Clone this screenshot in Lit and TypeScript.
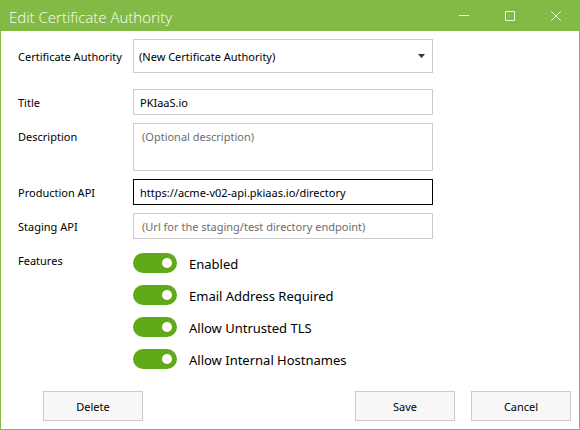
import { LitElement, html, css } from "lit";
import { customElement, property, state } from "lit/decorators.js";

@customElement("toggle-switch")
export class ToggleSwitch extends LitElement {
  @property() label = "";
  @property({ type: Boolean }) checked = false;

  static styles = css`
    :host {
      display: block;
    }
    .row {
      display: flex;
      align-items: center;
      gap: 12px;
      height: 20px;
      font-size: 13px;
      line-height: 20px;
      color: #000;
    }
    .switch {
      appearance: none;
      flex: none;
      display: flex;
      align-items: center;
      box-sizing: border-box;
      width: 44px;
      height: 20px;
      margin: 0;
      padding: 0 5px;
      border-radius: 10px;
      background: #999;
    }
    .switch::before {
      content: "";
      width: 10px;
      height: 10px;
      border-radius: 50%;
      background: #fff;
    }
    .switch:checked {
      justify-content: flex-end;
      background: #60a917;
    }
    .text {
      padding-top: 2px;
    }
  `;

  private onChange(e: Event) {
    this.checked = (e.target as HTMLInputElement).checked;
  }

  render() {
    return html`
      <label class="row">
        <input class="switch" type="checkbox" role="switch" .checked=${this.checked} @change=${this.onChange} />
        <span class="text">${this.label}</span>
      </label>
    `;
  }
}

@customElement("app-root")
export class AppRoot extends LitElement {
  @state() private features = [
    "Enabled",
    "Email Address Required",
    "Allow Untrusted TLS",
    "Allow Internal Hostnames",
  ];

  static styles = css`
    :host {
      display: block;
      font-family: "Noto Sans", "Open Sans", sans-serif;
      font-size: 11px;
      line-height: 16px;
      color: #000;
    }
    .window {
      display: flex;
      flex-direction: column;
      box-sizing: border-box;
      min-height: 100vh;
      border: 1px solid #82ba45;
      border-top: 0;
      background: #fff;
    }
    .titlebar {
      display: flex;
      align-items: center;
      justify-content: space-between;
      height: 31px;
      padding-left: 8px;
      background: #82ba45;
      color: #fff;
    }
    .title {
      margin: 0;
      padding-top: 2px;
      font-family: "Open Sans", "Noto Sans", sans-serif;
      font-size: 15px;
      line-height: 20px;
      font-weight: 300;
    }
    .controls {
      display: flex;
    }
    .control {
      display: grid;
      place-items: center;
      width: 46px;
      height: 31px;
      margin: 0;
      padding: 0;
      border: 0;
      background: none;
      color: #f0f7e9;
    }
    .glyph {
      display: block;
      width: 10px;
      height: 10px;
      fill: none;
      stroke: currentColor;
    }
    .form {
      display: grid;
      grid-template-columns: 115px minmax(0, 300px);
      row-gap: 8px;
      padding: 8px 17px 18px;
    }
    .label {
      padding-top: 6px;
    }
    .label.tall {
      padding-top: 10px;
    }
    .picker {
      position: relative;
      margin-bottom: 8px;
    }
    .field {
      display: block;
      box-sizing: border-box;
      width: 100%;
      height: 26px;
      margin: 0;
      padding: 0 6px;
      border: 1px solid #ccc;
      border-radius: 0;
      outline: 0;
      background: #fff;
      color: #000;
      font: inherit;
    }
    .field::placeholder {
      padding-left: 2px;
      color: #6d6d6d;
      opacity: 1;
    }
    .field.current,
    .field:focus {
      border-color: #000;
    }
    .field.select {
      appearance: none;
      height: 34px;
      padding: 2px 24px 0 5px;
    }
    .field.area {
      height: 48px;
      padding-top: 5px;
      resize: none;
    }
    .arrow {
      position: absolute;
      top: 15px;
      right: 8px;
      width: 7px;
      height: 4px;
      fill: #333;
      pointer-events: none;
    }
    .features {
      display: grid;
      gap: 12px;
      padding-top: 6px;
    }
    .actions {
      display: flex;
      gap: 16px;
      margin-top: auto;
      padding: 0 8px 8px 42px;
    }
    .button {
      box-sizing: border-box;
      width: 100px;
      height: 30px;
      margin: 0;
      padding: 1px 0 0;
      border: 1px solid #ccc;
      border-radius: 0;
      background: #f7f7f7;
      color: #000;
      font: inherit;
    }
    .delete {
      margin-right: auto;
    }
  `;

  render() {
    return html`
      <main class="window">
        <header class="titlebar">
          <h1 class="title">Edit Certificate Authority</h1>
          <div class="controls">
            <button class="control" aria-label="Minimize">
              <svg class="glyph" viewBox="0 0 10 10"><path d="M0 4.5H10" /></svg>
            </button>
            <button class="control" aria-label="Maximize">
              <svg class="glyph" viewBox="0 0 10 10"><path d="M.5 .5H9.500V9.500H.5Z" /></svg>
            </button>
            <button class="control" aria-label="Close">
              <svg class="glyph" viewBox="0 0 10 10"><path d="M.2 .2L9.800 9.800M9.800 .2L.2 9.800" /></svg>
            </button>
          </div>
        </header>

        <form class="form" id="authority" @submit=${(e: Event) => e.preventDefault()}>
          <label class="label tall" for="ca">Certificate Authority</label>
          <div class="picker">
            <select class="field select" id="ca">
              <option>(New Certificate Authority)</option>
            </select>
            <svg class="arrow" viewBox="0 0 7 4"><path d="M0 0H7L3.500 4Z" /></svg>
          </div>

          <label class="label" for="title">Title</label>
          <input class="field" id="title" type="text" value="PKIaaS.io" />

          <label class="label" for="description">Description</label>
          <textarea class="field area" id="description" placeholder="(Optional description)"></textarea>

          <label class="label" for="production">Production API</label>
          <input class="field current" id="production" type="text" value="https://acme-v02-api.pkiaas.io/directory" />

          <label class="label" for="staging">Staging API</label>
          <input class="field" id="staging" type="text" placeholder="(Url for the staging/test directory endpoint)" />

          <span class="label" id="features">Features</span>
          <div class="features" role="group" aria-labelledby="features">
            ${this.features.map((name) => html`<toggle-switch label=${name} checked></toggle-switch>`)}
          </div>
        </form>

        <footer class="actions">
          <button class="button delete" type="button">Delete</button>
          <button class="button" type="submit" form="authority">Save</button>
          <button class="button" type="button">Cancel</button>
        </footer>
      </main>
    `;
  }
}
